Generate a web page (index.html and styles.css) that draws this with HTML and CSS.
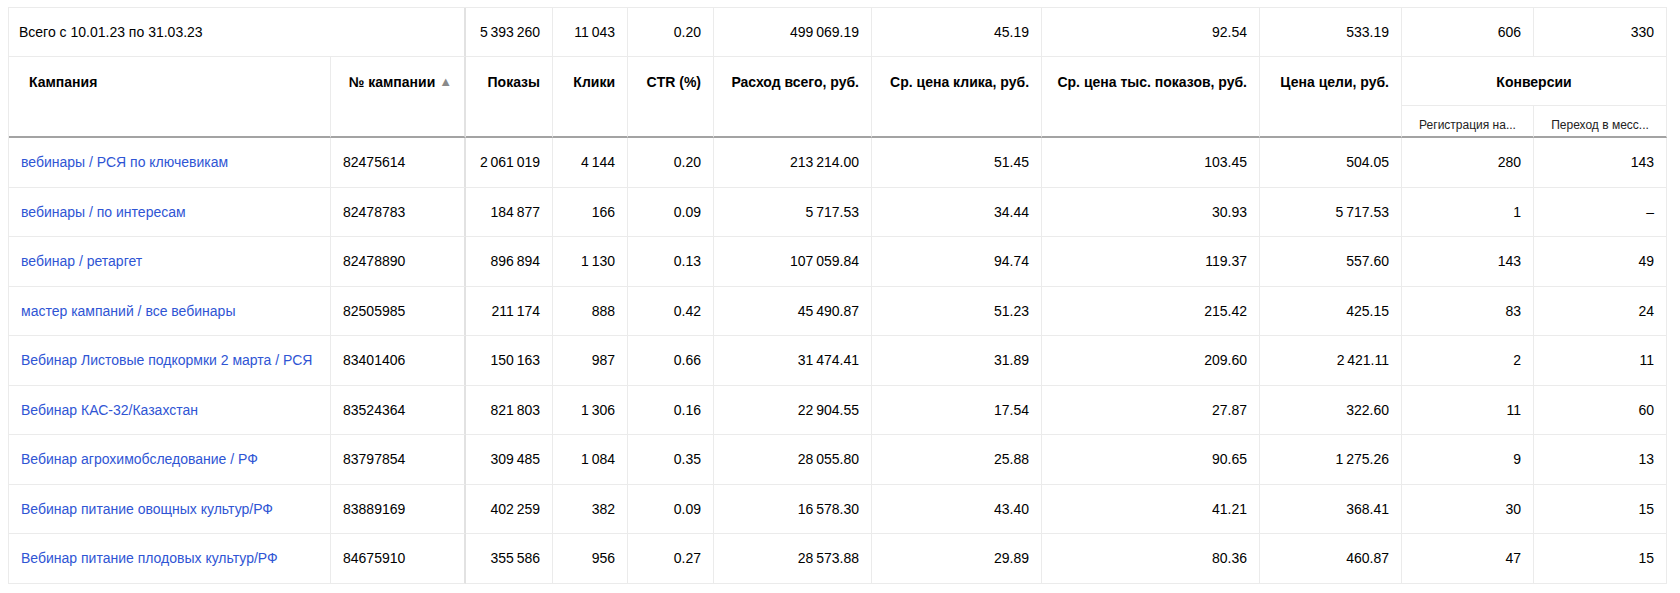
FILE: index.html
```html
<!DOCTYPE html>
<html lang="ru">
<head>
<meta charset="utf-8">
<title>Статистика кампаний</title>
<link rel="stylesheet" href="styles.css">
</head>
<body>
<table class="report">
  <colgroup>
    <col class="c-name"><col class="c-id"><col class="c-shows"><col class="c-clicks"><col class="c-ctr">
    <col class="c-cost"><col class="c-cpc"><col class="c-cpm"><col class="c-goal"><col class="c-conv1"><col class="c-conv2">
  </colgroup>
  <thead>
    <tr class="total">
      <td colspan="2" class="total-label sep">Всего с 10.01.23 по 31.03.23</td>
      <td class="num">5&thinsp;393&thinsp;260</td>
      <td class="num">11&thinsp;043</td>
      <td class="num">0.20</td>
      <td class="num">499&thinsp;069.19</td>
      <td class="num">45.19</td>
      <td class="num">92.54</td>
      <td class="num">533.19</td>
      <td class="num">606</td>
      <td class="num">330</td>
    </tr>
    <tr class="head1">
      <th rowspan="2" class="h-name">Кампания</th>
      <th rowspan="2" class="h-num sep">№ кампании <span class="sort">▲</span></th>
      <th rowspan="2" class="h-num">Показы</th>
      <th rowspan="2" class="h-num">Клики</th>
      <th rowspan="2" class="h-num">CTR (%)</th>
      <th rowspan="2" class="h-num">Расход всего, руб.</th>
      <th rowspan="2" class="h-num">Ср. цена клика, руб.</th>
      <th rowspan="2" class="h-num">Ср. цена тыс. показов, руб.</th>
      <th rowspan="2" class="h-num">Цена цели, руб.</th>
      <th colspan="2" class="h-group">Конверсии</th>
    </tr>
    <tr class="head2">
      <th class="h-sub">Регистрация на...</th>
      <th class="h-sub">Переход в месс...</th>
    </tr>
  </thead>
  <tbody>
    <tr><td><a href="#">вебинары / РСЯ по ключевикам</a></td><td class="sep">82475614</td><td class="num">2&thinsp;061&thinsp;019</td><td class="num">4&thinsp;144</td><td class="num">0.20</td><td class="num">213&thinsp;214.00</td><td class="num">51.45</td><td class="num">103.45</td><td class="num">504.05</td><td class="num">280</td><td class="num">143</td></tr>
    <tr><td><a href="#">вебинары / по интересам</a></td><td class="sep">82478783</td><td class="num">184&thinsp;877</td><td class="num">166</td><td class="num">0.09</td><td class="num">5&thinsp;717.53</td><td class="num">34.44</td><td class="num">30.93</td><td class="num">5&thinsp;717.53</td><td class="num">1</td><td class="num">–</td></tr>
    <tr><td><a href="#">вебинар / ретаргет</a></td><td class="sep">82478890</td><td class="num">896&thinsp;894</td><td class="num">1&thinsp;130</td><td class="num">0.13</td><td class="num">107&thinsp;059.84</td><td class="num">94.74</td><td class="num">119.37</td><td class="num">557.60</td><td class="num">143</td><td class="num">49</td></tr>
    <tr><td><a href="#">мастер кампаний / все вебинары</a></td><td class="sep">82505985</td><td class="num">211&thinsp;174</td><td class="num">888</td><td class="num">0.42</td><td class="num">45&thinsp;490.87</td><td class="num">51.23</td><td class="num">215.42</td><td class="num">425.15</td><td class="num">83</td><td class="num">24</td></tr>
    <tr><td><a href="#">Вебинар Листовые подкормки 2 марта / РСЯ</a></td><td class="sep">83401406</td><td class="num">150&thinsp;163</td><td class="num">987</td><td class="num">0.66</td><td class="num">31&thinsp;474.41</td><td class="num">31.89</td><td class="num">209.60</td><td class="num">2&thinsp;421.11</td><td class="num">2</td><td class="num">11</td></tr>
    <tr><td><a href="#">Вебинар КАС-32/Казахстан</a></td><td class="sep">83524364</td><td class="num">821&thinsp;803</td><td class="num">1&thinsp;306</td><td class="num">0.16</td><td class="num">22&thinsp;904.55</td><td class="num">17.54</td><td class="num">27.87</td><td class="num">322.60</td><td class="num">11</td><td class="num">60</td></tr>
    <tr><td><a href="#">Вебинар агрохимобследование / РФ</a></td><td class="sep">83797854</td><td class="num">309&thinsp;485</td><td class="num">1&thinsp;084</td><td class="num">0.35</td><td class="num">28&thinsp;055.80</td><td class="num">25.88</td><td class="num">90.65</td><td class="num">1&thinsp;275.26</td><td class="num">9</td><td class="num">13</td></tr>
    <tr><td><a href="#">Вебинар питание овощных культур/РФ</a></td><td class="sep">83889169</td><td class="num">402&thinsp;259</td><td class="num">382</td><td class="num">0.09</td><td class="num">16&thinsp;578.30</td><td class="num">43.40</td><td class="num">41.21</td><td class="num">368.41</td><td class="num">30</td><td class="num">15</td></tr>
    <tr><td><a href="#">Вебинар питание плодовых культур/РФ</a></td><td class="sep">84675910</td><td class="num">355&thinsp;586</td><td class="num">956</td><td class="num">0.27</td><td class="num">28&thinsp;573.88</td><td class="num">29.89</td><td class="num">80.36</td><td class="num">460.87</td><td class="num">47</td><td class="num">15</td></tr>
  </tbody>
</table>
</body>
</html>
```

FILE: styles.css
```css
html, body {
  background: #ffffff;
}
body {
  margin: 7px 8px;
  font-family: "Liberation Sans", Arial, sans-serif;
  font-size: 14px;
  color: #000000;
}
.report {
  table-layout: fixed;
  width: 1659px;
  border-collapse: separate;
  border-spacing: 0;
  border-top: 1px solid #ebebeb;
  border-left: 1px solid #ebebeb;
}
.c-name { width: 322px; }
.c-id { width: 135px; }
.c-shows { width: 87px; }
.c-clicks { width: 75px; }
.c-ctr { width: 86px; }
.c-cost { width: 158px; }
.c-cpc { width: 170px; }
.c-cpm { width: 218px; }
.c-goal { width: 142px; }
.c-conv1 { width: 132px; }
.c-conv2 { width: 133px; }

.report td, .report th {
  box-sizing: border-box;
  border-right: 1px solid #ebebeb;
  border-bottom: 1px solid #ebebeb;
  padding: 0 12px;
  line-height: 16px;
  white-space: nowrap;
  overflow: hidden;
}
.report td {
  vertical-align: middle;
  text-align: left;
}
.report .sep {
  border-right: 2px solid #e2e2e2;
}
.report .num {
  text-align: right;
}
.total td {
  height: 49px;
}
.report .total-label {
  padding-left: 10px;
}
.report th {
  font-weight: bold;
  color: #000000;
  vertical-align: top;
  padding-top: 17px;
}
.head1 th {
  height: 49px;
}
.report .h-name {
  text-align: left;
  padding-left: 20px;
  border-bottom: 2px solid #a3a3a3;
}
.report .h-num {
  text-align: right;
  border-bottom: 2px solid #a3a3a3;
}
.report .sort {
  color: #8a8a8a;
  font-size: 13px;
  vertical-align: 1px;
}
.report .h-group {
  text-align: center;
}
.report .h-sub {
  height: 32px;
  font-weight: normal;
  font-size: 12px;
  text-align: center;
  vertical-align: middle;
  padding: 7px 4px 0;
  color: #222222;
  border-bottom: 2px solid #a3a3a3;
}
tbody td {
  height: 49.5px;
}
.report a {
  color: #2f55d4;
  text-decoration: none;
}
```
